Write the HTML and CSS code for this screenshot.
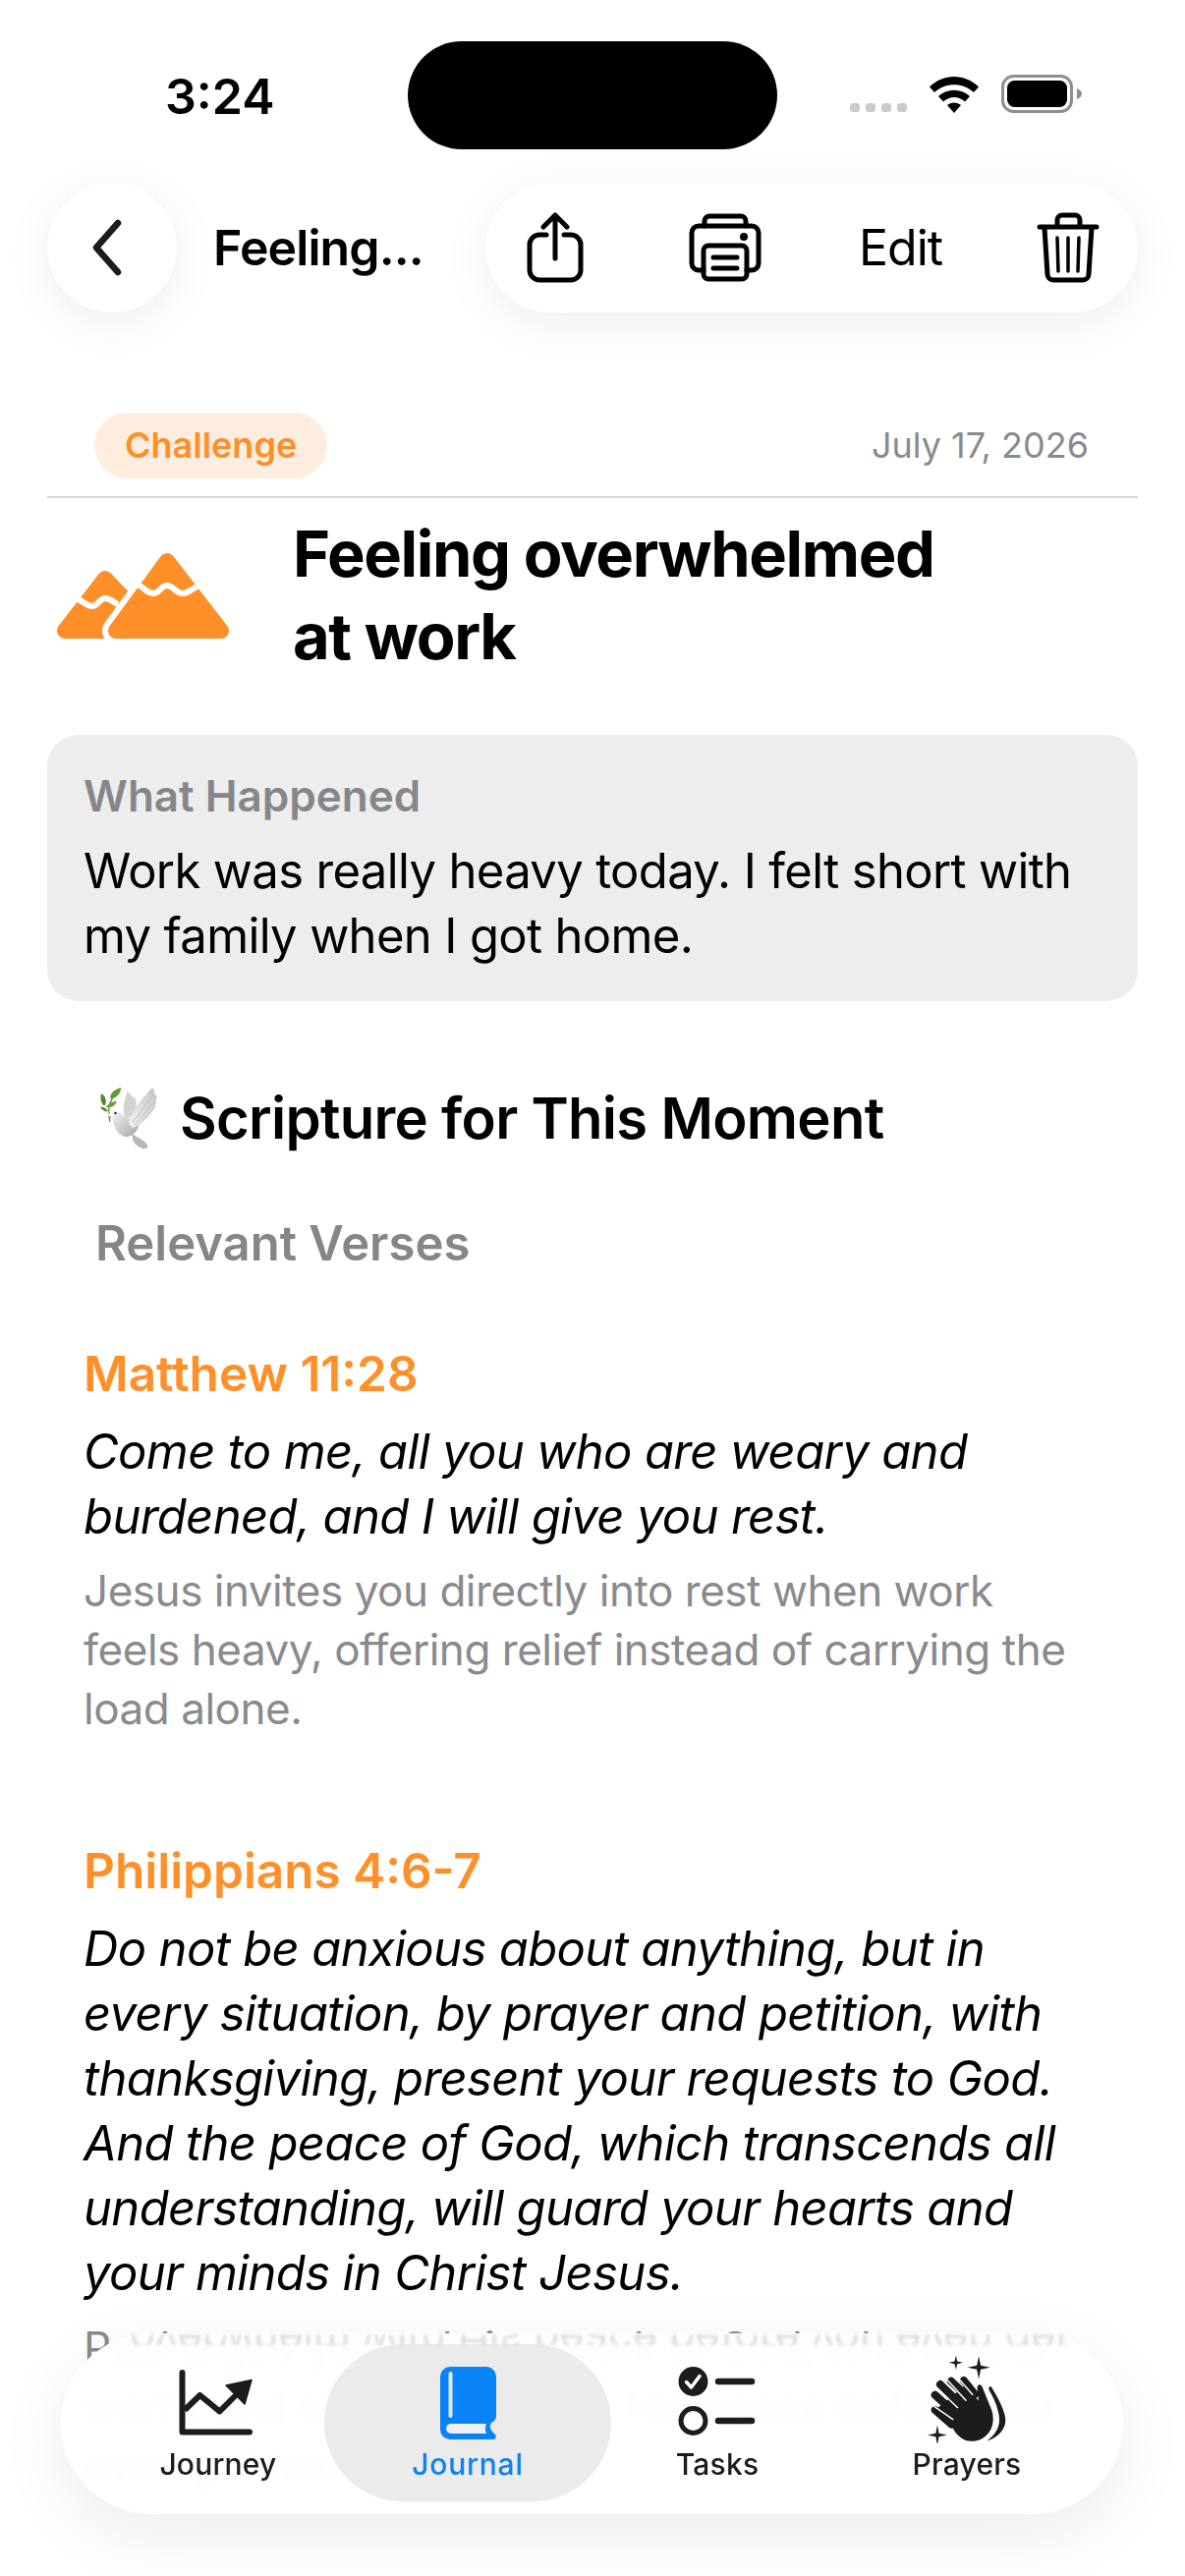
FILE: index.html
```html
<!DOCTYPE html>
<html>
<head>
	<title>Journal Entry</title>
	<link rel="stylesheet" href="styles.css">
</head>
<body>
	<div class="screen">
		<div class="status">
			<span class="time">3:24</span>
			<div class="island"></div>
			<div class="status-icons">
				<div class="dots"><i></i><i></i><i></i><i></i></div>
				<svg class="wifi" width="52" height="38" viewBox="0 0 52 38">
					<path d="M1 11.5C15 -2.5 37 -2.5 51 11.5L46 17C35 6.5 17 6.5 6 17Z"/>
					<path d="M10 21C19 12.5 33 12.5 42 21L37 26.500C30.500 20.500 21.500 20.500 15 26.500Z"/>
					<path d="M19 30C23 26.500 29 26.500 33 30L26 38Z"/>
				</svg>
				<svg class="battery" width="82" height="39" viewBox="0 0 82 39">
					<rect x="1.500" y="1.500" width="70" height="36" rx="11" fill="none" stroke="#8e8e90" stroke-width="3"/>
					<rect x="6" y="6" width="61" height="27" rx="7.500" fill="#000"/>
					<path d="M77 14c3 1 5 3 5 5.500s-2 4.500-5 5.500z" fill="#8e8e90"/>
				</svg>
			</div>
		</div>

		<div class="topbar">
			<div class="back">
				<svg width="36" height="60" viewBox="0 0 36 60"><path d="M29 5L7 30L29 55" fill="none" stroke="#1c1c1c" stroke-width="6.500" stroke-linecap="round" stroke-linejoin="round"/></svg>
			</div>
			<div class="crumb">Feeling...</div>
			<div class="actions">
				<svg class="act-share" width="58" height="72" viewBox="0 0 58 72" fill="none" stroke="#000" stroke-width="5" stroke-linecap="round" stroke-linejoin="round">
					<path d="M20 23H13A10 10 0 0 0 3 33V59A10 10 0 0 0 13 69H45A10 10 0 0 0 55 59V33A10 10 0 0 0 45 23H38"/>
					<path d="M29 47V3M17 15L29 3L41 15"/>
				</svg>
				<svg class="act-print" width="74" height="70" viewBox="0 0 74 70" fill="none" stroke="#000" stroke-width="5" stroke-linecap="round" stroke-linejoin="round">
					<path d="M16 13V8A5 5 0 0 1 21 3H53A5 5 0 0 1 58 8V13"/>
					<path d="M15 58H10A7 7 0 0 1 3 51V20A7 7 0 0 1 10 13H64A7 7 0 0 1 71 20V51A7 7 0 0 1 64 58H59"/>
					<rect x="15" y="33" width="44" height="34" rx="5"/>
					<path d="M25 45H49M25 56H49"/>
					<circle cx="56" cy="24" r="4" fill="#000" stroke="none"/>
				</svg>
				<span class="edit">Edit</span>
				<svg class="act-trash" width="64" height="72" viewBox="0 0 64 72" fill="none" stroke="#000" stroke-width="5" stroke-linecap="round" stroke-linejoin="round">
					<path d="M3 15H61"/>
					<path d="M21 14V8A5 5 0 0 1 26 3H39A5 5 0 0 1 44 8V14"/>
					<path d="M8 16L11 63A6 6 0 0 0 17 69H47A6 6 0 0 0 53 63L56 16"/>
					<path d="M21 26L22 60M32 26V60M43 26L42 60" stroke-width="3.500"/>
				</svg>
			</div>
		</div>

		<div class="meta">
			<span class="badge">Challenge</span>
			<span class="date">July 17, 2026</span>
		</div>

		<div class="entry-head">
			<svg class="mountain" width="177" height="88" viewBox="0 0 177 88">
				<path d="M49 27L8 80H100Z" fill="#ff8f28" stroke="#ff8f28" stroke-width="16" stroke-linejoin="round"/>
				<path d="M112 9L60 80H167Z" fill="#fff" stroke="#fff" stroke-width="28" stroke-linejoin="round"/>
				<path d="M112 9L60 80H167Z" fill="#ff8f28" stroke="#ff8f28" stroke-width="16" stroke-linejoin="round"/>
				<path d="M82 33C90 36 90 42 98 42C105 42 105 34 112 34C119 34 120 42 128 42C135 42 137 36 146 34" fill="none" stroke="#fff" stroke-width="6"/>
				<path d="M21 48C28 50 29 55 36 55C42 55 43 47 49 47C55 47 57 51 62 53" fill="none" stroke="#fff" stroke-width="6"/>
			</svg>
			<h1>Feeling overwhelmed<br>at work</h1>
		</div>

		<div class="card">
			<div class="card-label">What Happened</div>
			<p>Work was really heavy today. I felt short with my family when I got home.</p>
		</div>

		<div class="section-title">
			<svg width="58" height="63" viewBox="0 0 58 63">
				<defs>
					<linearGradient id="wing" x1="0" y1="1" x2="1" y2="0"><stop offset="0" stop-color="#f3f3f2"/><stop offset="1" stop-color="#c4c4c2"/></linearGradient>
					<linearGradient id="bird" x1="0" y1="0" x2="1" y2="1"><stop offset="0" stop-color="#f3f3f2"/><stop offset="1" stop-color="#a4a4a2"/></linearGradient>
				</defs>
				<path d="M25 31C22 22 25 10 28 4C31 7 33 10 36 11L38 30Z" fill="#d2d2d0"/>
				<path d="M12 29C14 25 19 24 22 27C24 31 31 33 36 31L39 38C38 45 33 50 26 50C18 49 13 40 12 29Z" fill="url(#bird)"/>
				<path d="M29 37C32 22 44 10 53 0C54 2 56 3 55 6C58 8 58 10 57 13C57 18 56 21 53 24C49 31 42 37 33 41Z" fill="url(#wing)"/>
				<path d="M33 36L54 7M35 38L56 14M38 39L54 22" stroke="#b9b9b7" stroke-width="0.800" fill="none"/>
				<path d="M32 47C36 49 41 52 45 55C49 58 49 62 47 62C41 63 34 58 33 52Z" fill="#b7b7b5"/>
				<path d="M11 30L8 28L10 33Z" fill="#c77b5a"/>
				<circle cx="15.500" cy="26" r="1.300" fill="#333"/>
				<path d="M9 30L10 35M9 27C8 20 10 12 17 5" stroke="#5f8f35" stroke-width="1.200" fill="none"/>
				<path d="M10 11C10 5 15 2 21 0C21 6 17 11 10 11Z" fill="#5f9a35"/>
				<path d="M3 18C0 14 0 10 1 6C5 8 7 13 5 18Z" fill="#4f8a2f"/>
				<path d="M6 20C8 16 12 14 17 14C15 19 11 21 6 20Z" fill="#68a03a"/>
				<path d="M0 20C3 19 6 21 8 24C5 25 2 23 0 20Z" fill="#4f8a2f"/>
			</svg>
			<h2>Scripture for This Moment</h2>
		</div>
		<div class="section-sub">Relevant Verses</div>

		<div class="verse first">
			<div class="ref">Matthew 11:28</div>
			<div class="quote">Come to me, all you who are weary and burdened, and I will give you rest.</div>
			<div class="note">Jesus invites you directly into rest when work feels heavy, offering relief instead of carrying the load alone.</div>
		</div>

		<div class="verse">
			<div class="ref">Philippians 4:6-7</div>
			<div class="quote">Do not be anxious about anything, but in every situation, by prayer and petition, with thanksgiving, present your requests to God. And the peace of God, which transcends all understanding, will guard your hearts and your minds in Christ Jesus.</div>
			<div class="note">Paul urges you to bring work to God, who meets worry and overwhelm with His peace before you even get home.</div>
		</div>

		<div class="tabbar">
			<div class="tab">
				<div class="tab-icon">
					<svg class="icon-chart" width="80" height="70" viewBox="0 0 80 70">
						<path d="M3.500 4V64.500H72" fill="none" stroke="#1c1c1c" stroke-width="6" stroke-linecap="round" stroke-linejoin="round"/>
						<path d="M6 42L21.500 27L41.500 43.500L60 25" fill="none" stroke="#1c1c1c" stroke-width="6" stroke-linejoin="round"/>
						<path d="M48 17L74 11.500L67 36Z" fill="#1c1c1c" stroke="#1c1c1c" stroke-width="1.500" stroke-linejoin="round"/>
					</svg>
				</div>
				<span>Journey</span>
			</div>
			<div class="tab active">
				<div class="tab-icon">
					<svg class="icon-book" width="57" height="74" viewBox="0 0 57 74">
						<path d="M10 0H47A10 10 0 0 1 57 10V50C57 53 55.500 55 53 56.500C51 58 50.500 60 51 62C51.500 65 54 67 56 69C57.500 70.500 56.500 74 54 74H10A10 10 0 0 1 0 64V10A10 10 0 0 1 10 0Z" fill="#0a82f8"/>
						<path d="M11 58H47C45.500 61 45.500 65 47 68H11A5 5 0 0 1 11 58Z" fill="#eef2f6"/>
						<rect x="8.500" y="5" width="4" height="47" rx="2" fill="#dfeaf6"/>
					</svg>
				</div>
				<span>Journal</span>
			</div>
			<div class="tab">
				<div class="tab-icon">
					<svg class="icon-tasks" width="80" height="70" viewBox="0 0 80 70">
						<circle cx="15.500" cy="15" r="15" fill="#1c1c1c"/>
						<path d="M8.500 15.500L13.500 21L22 9.500" fill="none" stroke="#fff" stroke-width="3.500" stroke-linecap="round" stroke-linejoin="round"/>
						<circle cx="15.500" cy="55" r="12.500" fill="none" stroke="#1c1c1c" stroke-width="5"/>
						<path d="M41 15H75M41 55H75" stroke="#1c1c1c" stroke-width="6.500" stroke-linecap="round"/>
					</svg>
				</div>
				<span>Tasks</span>
			</div>
			<div class="tab">
				<div class="tab-icon">
					<svg width="83" height="90" viewBox="130 50 250 270">
						<path d="M220 51L224 69L242 73L224 77L220 95L216 77L198 73L216 69Z" fill="#1c1c1c"/>
						<path d="M290 53L296 82L325 88L296 94L290 123L284 94L255 88L284 82Z" fill="#1c1c1c"/>
						<path d="M163 265L168 290L193 295L168 300L163 325L158 300L133 295L158 290Z" fill="#1c1c1c"/>
						<path d="M156 218L206 265C216 290 240 316 270 314C315 312 345 270 330 220L300 146C294 136 282 140 286 156L289 190L252 140Z" fill="#1c1c1c"/>
						<path d="M156 218L206 262M156 172L222 232M205 130L268 190M172 140L240 206M244 128L278 170" fill="none" stroke="#1c1c1c" stroke-width="24" stroke-linecap="round"/>
						<path d="M150 205L212 248M166 155L226 212M192 125L252 190M228 122L272 172" fill="none" stroke="#fff" stroke-width="4.500"/>
						<path d="M329 148C352 185 372 225 372 250C372 280 345 305 315 313C340 295 358 270 352 235C347 205 335 180 322 158C318 148 324 142 329 148Z" fill="#1c1c1c"/>
					</svg>
				</div>
				<span>Prayers</span>
			</div>
		</div>
	</div>
</body>
</html>
```

FILE: styles.css
```css
* {
	box-sizing: border-box;
}
body {
	margin: 0;
	background-color: #fff;
	font-family: Inter, "Liberation Sans", sans-serif;
	color: #000;
}
h1, h2, p {
	margin: 0;
}
.screen {
	position: relative;
	width: 1206px;
	height: 2622px;
	overflow: hidden;
	background-color: #fff;
}

/* status bar */
.status {
	display: grid;
	grid-template-columns: 415px 376px 1fr;
	align-items: center;
	padding-top: 42px;
}
.time {
	padding-left: 168px;
	font-size: 50px;
	font-weight: 600;
	margin-top: 2px;
}
.island {
	height: 110px;
	border-radius: 55px;
	background-color: #000;
}
.status-icons {
	display: flex;
	align-items: flex-end;
	margin-left: 74px;
	height: 39px;
	margin-top: -4px;
}
.dots {
	display: flex;
	gap: 6px;
	margin-bottom: 1px;
}
.dots i {
	width: 10px;
	height: 9px;
	border-radius: 3px;
	background-color: #cbcbcb;
}
.wifi {
	margin-left: 22px;
}
.battery {
	margin-left: 22px;
}

/* top bar */
.topbar {
	display: flex;
	align-items: center;
	margin-top: 34px;
	padding: 0 48px;
}
.back {
	display: flex;
	align-items: center;
	justify-content: center;
	width: 132px;
	height: 132px;
	padding-right: 10px;
	border-radius: 50%;
	background-color: #fff;
	box-shadow: 0 10px 50px rgba(0, 0, 0, 0.07);
}
.crumb {
	margin-left: 37px;
	font-size: 50px;
	font-weight: 600;
	letter-spacing: -0.900px;
}
.actions {
	display: flex;
	align-items: center;
	width: 664px;
	height: 132px;
	margin-left: auto;
	padding-left: 42px;
	border-radius: 66px;
	background-color: #fff;
	box-shadow: 0 10px 50px rgba(0, 0, 0, 0.07);
}
.act-print {
	margin-left: 107px;
}
.edit {
	margin-left: 99px;
	font-size: 50px;
	letter-spacing: -1px;
}
.act-trash {
	margin-left: 96px;
}

/* meta row */
.meta {
	display: flex;
	align-items: center;
	justify-content: space-between;
	margin: 102px 48px 0;
	padding: 0 50px 18px 48px;
	border-bottom: 2px solid #d4d4d6;
}
.badge {
	padding: 11px 31px 12px;
	border-radius: 34px;
	background-color: #ffeee0;
	color: #ff8f28;
	font-size: 36px;
	font-weight: 600;
}
.date {
	color: #8a8a8e;
	font-size: 36px;
	margin-top: -2px;
}

.entry-head {
	display: flex;
	align-items: center;
	padding: 15px 0 0 58px;
}
.mountain {
	flex: none;
}
h1 {
	margin-left: 63px;
	font-size: 65px;
	line-height: 84px;
	font-weight: 700;
	letter-spacing: -1.400px;
}

/* what happened */
.card {
	margin: 58px 48px 0;
	padding: 33px 37px;
	border-radius: 32px;
	background-color: #ededed;
}
.card-label {
	margin-bottom: 15px;
	color: #86868a;
	font-size: 44px;
	line-height: 58px;
	font-weight: 600;
}
.card p {
	font-size: 49px;
	line-height: 66px;
	letter-spacing: -0.650px;
}

/* scripture */
.section-title {
	display: flex;
	align-items: center;
	gap: 23px;
	margin: 86px 0 0 102px;
}
h2 {
	font-size: 58px;
	font-weight: 600;
	line-height: 66px;
	letter-spacing: -0.700px;
}
.section-sub {
	margin: 65px 0 0 97px;
	color: #86868a;
	font-size: 49px;
	font-weight: 600;
	line-height: 60px;
}
.verse {
	margin: 105px 85px 0;
}
.verse.first {
	margin-top: 72px;
}
.ref {
	color: #ff8f28;
	font-size: 49.500px;
	font-weight: 600;
	line-height: 60px;
}
.quote {
	margin-top: 17px;
	font-size: 49px;
	font-style: italic;
	line-height: 66px;
	letter-spacing: -0.650px;
}
.note {
	max-width: 1020px;
	margin-top: 12px;
	color: #8a8a8e;
	font-size: 44px;
	line-height: 60px;
	letter-spacing: -0.470px;
}

/* tab bar */
.tabbar {
	position: absolute;
	left: 62px;
	top: 2375px;
	display: grid;
	grid-template-columns: repeat(4, 254px);
	width: 1081px;
	height: 184px;
	padding: 11px 0 0 33px;
	border-radius: 92px;
	background-color: rgba(255, 255, 255, 0.96);
	-webkit-backdrop-filter: blur(4px);
	backdrop-filter: blur(4px);
	box-shadow: 0 20px 70px rgba(0, 0, 0, 0.08);
}
.tabbar::before {
	content: "overwhelm with His peace before you even get home";
	position: absolute;
	left: 70px;
	top: 1px;
	width: 960px;
	height: 11px;
	overflow: hidden;
	color: #dedede;
	font-size: 44px;
	line-height: 11px;
	letter-spacing: -0.470px;
	white-space: nowrap;
	transform: scaleY(-1);
	filter: blur(1.500px);
}
.tab {
	display: flex;
	flex-direction: column;
	align-items: center;
	height: 160px;
	padding-top: 11px;
	color: #1c1c1c;
	font-size: 30px;
	font-weight: 500;
	line-height: 40px;
	letter-spacing: 0.200px;
}
.tab.active {
	margin: 0 -19px;
	border-radius: 80px;
	background-color: #ebebeb;
	color: #0a82f8;
	letter-spacing: 0.800px;
}
.tab-icon {
	display: flex;
	align-items: center;
	justify-content: center;
	height: 90px;
	margin-bottom: 1px;
}
.icon-chart {
	margin-top: 8px;
}
.icon-book {
	margin-top: 8px;
}
.icon-tasks {
	margin-top: 3px;
}
```
